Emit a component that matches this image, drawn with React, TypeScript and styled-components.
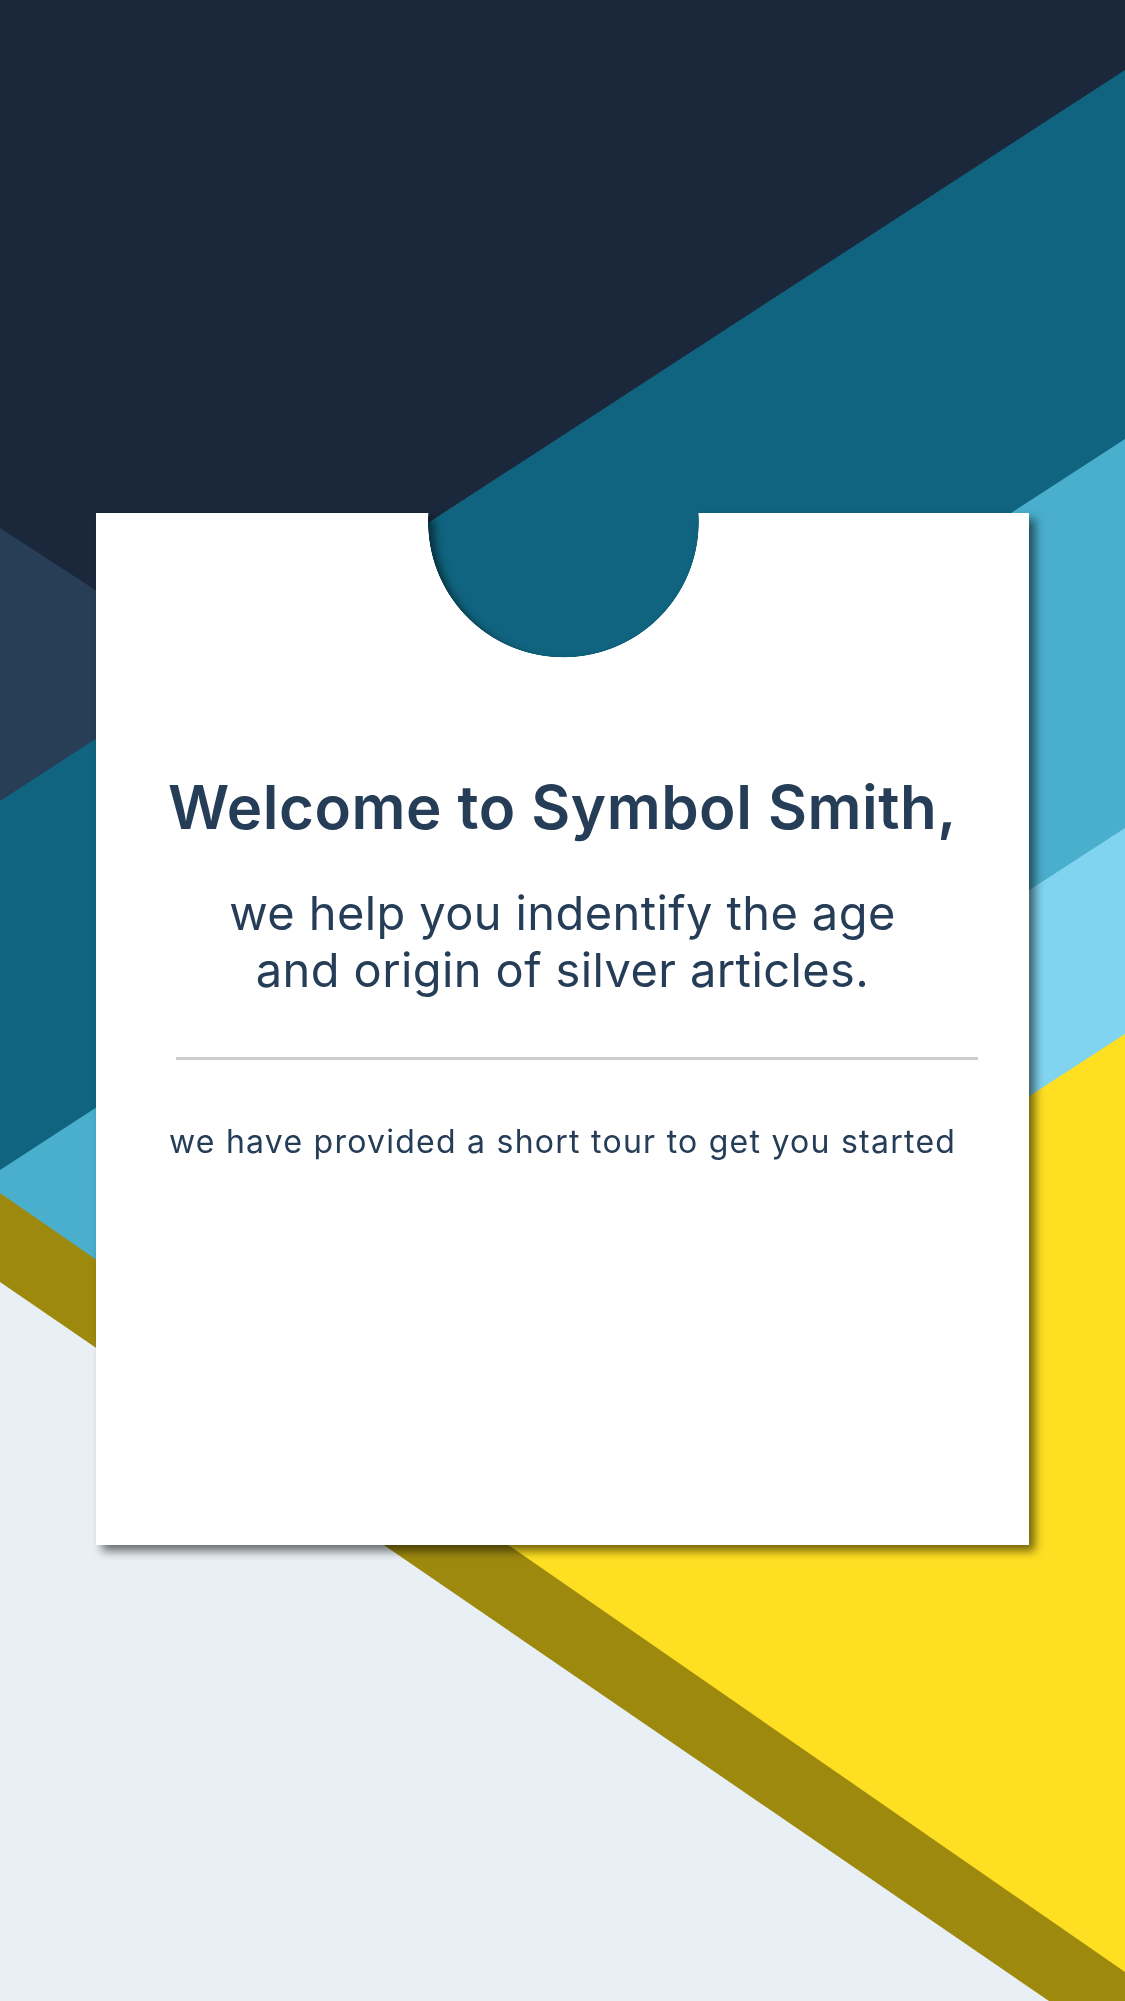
import React from "react";
import styled, { createGlobalStyle } from "styled-components";

const GlobalStyle = createGlobalStyle`
  html, body {
    margin: 0;
    padding: 0;
    background: #1b283b;
  }
  body {
    font-family: Inter, "Noto Sans", "Liberation Sans", sans-serif;
    -webkit-font-smoothing: antialiased;
  }
`;

const Page = styled.div`
  display: grid;
  width: 1125px;
  height: 2001px;
  overflow: hidden;
`;

const Backdrop = styled.svg`
  grid-area: 1 / 1;
  width: 1125px;
  height: 2001px;
  display: block;
`;

const Content = styled.main`
  grid-area: 1 / 1;
  display: flex;
  justify-content: center;
  align-items: flex-start;
  padding-top: 513px;
  box-sizing: border-box;
`;

const CardFrame = styled.div`
  width: 933px;
  height: 1032px;
  filter: drop-shadow(6px 6px 5px rgba(0, 0, 0, 0.55));
`;

const Card = styled.section`
  width: 100%;
  height: 100%;
  background: #ffffff;
  display: flex;
  flex-direction: column;
  align-items: center;
  box-sizing: border-box;
  padding-top: 258px;
  -webkit-mask: radial-gradient(circle at 50.1% 9px, transparent 135px, #000 135.6px);
  mask: radial-gradient(circle at 50.1% 9px, transparent 135px, #000 135.6px);
`;

const Title = styled.h1`
  margin: 0;
  font-size: 60px;
  line-height: 72px;
  font-weight: 600;
  color: #263d58;
  text-align: center;
  letter-spacing: 0.5px;
`;

const Lead = styled.p`
  margin: 41px 0 0;
  font-size: 47px;
  line-height: 57px;
  font-weight: 400;
  color: #263d58;
  text-align: center;
  letter-spacing: 0.4px;
`;

const Divider = styled.hr`
  align-self: stretch;
  border: 0;
  height: 3px;
  background: #cfcccc;
  margin: 59px 51px 0 80px;
`;

const Note = styled.p`
  margin: 62px 0 0;
  font-size: 32px;
  line-height: 40px;
  font-weight: 400;
  color: #263d58;
  text-align: center;
  letter-spacing: 1.25px;
`;

type Band = { color: string; points: string };

const bands: Band[] = [
  { color: "#1b283b", points: "0,0 1125,0 1125,2001 0,2001" },
  { color: "#283d56", points: "0,528 1125,1259 1125,2001 0,2001" },
  { color: "#10647f", points: "1125,70 0,801 0,2001 1125,2001" },
  { color: "#4aaecd", points: "1125,439 0,1170 0,2001 1125,2001" },
  { color: "#80d4f0", points: "1125,828 0,1559 0,2001 1125,2001" },
  { color: "#ffdf22", points: "1125,1034 0,1765 0,2001 1125,2001" },
  { color: "#9e890f", points: "0,1193 1125,1972 1125,2001 0,2001" },
  { color: "#e8f0f6", points: "0,1282 1049,2001 0,2001" },
];

export default function App() {
  return (
    <>
      <GlobalStyle />
      <Page>
        <Backdrop viewBox="0 0 1125 2001" aria-hidden="true">
          {bands.map((b, i) => (
            <polygon key={i} points={b.points} fill={b.color} />
          ))}
        </Backdrop>
        <Content>
          <CardFrame>
            <Card>
              <Title>Welcome to Symbol Smith,</Title>
              <Lead>
                we help you indentify the age
                <br />
                and origin of silver articles.
              </Lead>
              <Divider />
              <Note>we have provided a short tour to get you started</Note>
            </Card>
          </CardFrame>
        </Content>
      </Page>
    </>
  );
}
